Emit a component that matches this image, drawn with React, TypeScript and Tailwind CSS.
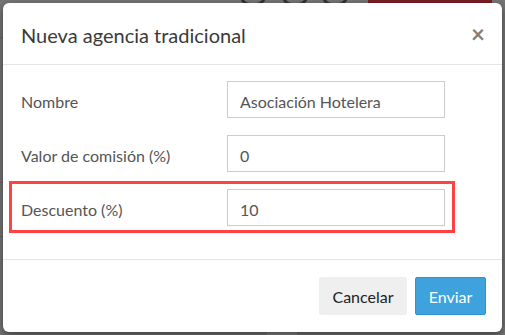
import React from 'react';

const fields = [
  { label: 'Nombre', value: 'Asociación Hotelera', highlight: false },
  { label: 'Valor de comisión (%)', value: '0', highlight: false },
  { label: 'Descuento (%)', value: '10', highlight: true },
];

export default function App() {
  return (
    <div
      className="relative h-[335px] w-[505px] overflow-hidden bg-[#767676] p-[3px]"
      style={{ fontFamily: 'Lato, "Open Sans", sans-serif' }}
    >
      {/* dimmed page behind the modal */}
      <div className="absolute left-[240px] top-[-14px] h-[20px] w-[26px] rounded-full border-[3px] border-[#333]" />
      <div className="absolute left-[282px] top-[-14px] h-[20px] w-[26px] rounded-full border-[3px] border-[#333]" />
      <div className="absolute left-[322px] top-[-14px] h-[20px] w-[26px] rounded-full border-[3px] border-[#333]" />
      <div className="absolute left-[368px] top-0 h-[6px] w-[124px] bg-[#7a1f24]" />
      <div className="absolute left-0 top-[37px] h-px w-[4px] bg-[#666]" />
      <div className="absolute left-0 top-[182px] h-px w-[4px] bg-[#666]" />
      <div className="absolute left-0 top-[236px] h-px w-[4px] bg-[#666]" />
      <div className="absolute left-[267px] top-[331px] h-[4px] w-[30px] bg-[#858585]" />

      <div className="relative flex h-[329px] w-[499px] flex-col rounded-[6px] bg-white shadow-[0_3px_9px_rgba(0,0,0,0.5)]">
        {/* header */}
        <div className="flex h-[62px] items-center justify-between border-b border-[#e5e5e5] pl-[18px] pr-[17px]">
          <h4 className="pt-[3px] text-[20px] leading-none text-[#3a3a3a]">Nueva agencia tradicional</h4>
          <span className="text-[24px] font-bold leading-none text-[#808080]">×</span>
        </div>

        {/* body */}
        <div className="flex flex-1 flex-col gap-[17px] border-b border-[#e5e5e5] pt-[16px]">
          {fields.map((f, i) => (
            <div key={i} className="relative flex items-center pl-[18px]">
              {f.highlight && (
                <div className="absolute left-[6px] top-[-8px] h-[52px] w-[446px] border-[3px] border-[#ff4242]" />
              )}
              <label className="w-[206px] pt-[4px] text-[16px] text-[#555]">{f.label}</label>
              <div className="flex h-[37px] w-[218px] items-center border border-[#ccc] px-[12px] pt-[4px] text-[16px] text-[#555]">
                {f.value}
              </div>
            </div>
          ))}
        </div>

        {/* footer */}
        <div className="flex h-[72px] items-center justify-end gap-[8px] pr-[16px]">
          <button className="h-[38px] w-[88px] rounded-[2px] bg-[#efefef] pt-[2px] text-[16px] text-[#222]">Cancelar</button>
          <button className="h-[38px] w-[71px] rounded-[2px] border border-[#2f93cf] bg-[#3ea2dc] pt-[2px] text-[16px] text-white">
            Enviar
          </button>
        </div>
      </div>
    </div>
  );
}
